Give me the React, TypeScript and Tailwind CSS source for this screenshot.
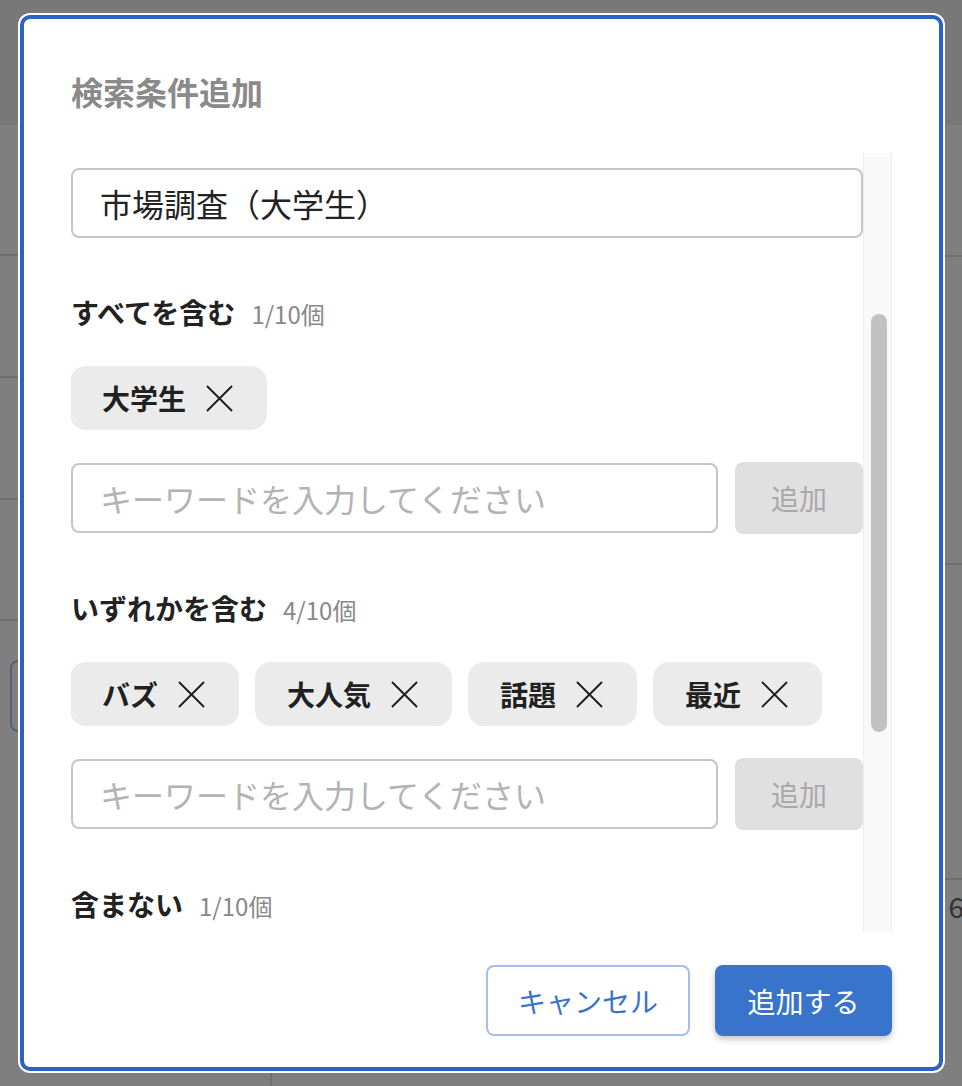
const font = "font-['Noto_Sans_CJK_JP','Noto_Sans',sans-serif]";

const CloseIcon = () => (
  <svg viewBox="0 0 28 28" className="h-[27px] w-[27px] shrink-0" fill="none">
    <path d="M1 1L27 27M27 1L1 27" stroke="#1f1f1f" strokeWidth="2" />
  </svg>
);

const Chip = ({ label }: { label: string }) => (
  <div className="flex h-[64px] items-center gap-[20px] rounded-[16px] bg-[#ebebeb] pl-[32px] pr-[34px]">
    <span className="text-[28px] font-bold leading-none text-[#212121]">{label}</span>
    <CloseIcon />
  </div>
);

const KeywordRow = () => (
  <div className="mt-[33px] flex gap-[17px]">
    <input
      placeholder="キーワードを入力してください"
      className="h-[70px] min-w-0 flex-1 rounded-[8px] border-2 border-[#c6c6c6] px-[27px] text-[32px] text-[#222] outline-none placeholder:text-[#b3b3b3]"
    />
    <button className="-mt-px flex h-[72px] w-[128px] items-center justify-center rounded-[8px] bg-[#e0e0e0] text-[28px] text-[#a9a9a9]">
      追加
    </button>
  </div>
);

const Section = ({ title, count, chips }: { title: string; count: string; chips?: string[] }) => (
  <div className="mt-[54px] first:mt-[55px]">
    <div className="flex h-[40px] items-baseline leading-[40px]">
      <span className="text-[28px] font-bold text-[#222]">{title}</span>
      <span className="ml-[16px] text-[24px] text-[#888]">{count}</span>
    </div>
    {chips && (
      <>
        <div className="mt-[34px] -ml-px flex flex-wrap gap-[16px]">
          {chips.map((c) => (
            <Chip key={c} label={c} />
          ))}
        </div>
        <KeywordRow />
      </>
    )}
  </div>
);

const BackgroundPage = () => (
  <div className="flex h-[1086px] flex-col bg-white">
    <div className="h-[125px] shrink-0 bg-[#f0f0f0]" />
    <div className="flex flex-1">
      <div className="flex w-[272px] shrink-0 flex-col border-r-2 border-[#dedede]">
        <div className="h-[131px] border-b-2 border-[#dedede]" />
        <div className="h-[122px] border-b-2 border-[#dedede]" />
        <div className="h-[122px] border-b-2 border-[#dedede]" />
        <div className="h-[121px] border-b-2 border-[#dedede]" />
        <div className="pl-[10px] pt-[39px]">
          <div className="h-[72px] w-[200px] rounded-[8px] border-2 border-[#a9c2ee]" />
        </div>
      </div>
      <div className="flex flex-1 flex-col">
        <div className="h-[132px] border-b-2 border-[#dedede]" />
        <div className="h-[308px] border-b-2 border-[#dedede]" />
        <div className="h-[315px] border-b-2 border-[#dedede]" />
        <div className="flex justify-end pt-[6px] text-[28px] leading-[40px] text-[#666]">
          <span className="-mr-[2px]">6</span>
        </div>
      </div>
    </div>
  </div>
);

export default function App() {
  return (
    <div className={`relative h-[1086px] w-full overflow-hidden ${font}`}>
      <BackgroundPage />
      <div className="absolute inset-0 bg-black/50 pl-[20px] pt-[15px]">
        <div className="flex h-[1056px] w-[923px] flex-col rounded-[10px] border-4 border-[#2c62c8] bg-white px-[47px] pb-[31px] pt-[48px] ring-2 ring-white">
          <h2 className="flex h-[48px] shrink-0 items-center text-[32px] font-bold leading-none text-[#8a8a8a]">
            検索条件追加
          </h2>

          <div className="mt-[38px] flex min-h-0 flex-1">
            <div className="min-w-0 flex-1 overflow-hidden pt-[15px]">
              <input
                defaultValue="市場調査（大学生）"
                className="h-[70px] w-full rounded-[8px] border-2 border-[#c6c6c6] px-[27px] text-[32px] text-[#222] outline-none"
              />
              <Section title="すべてを含む" count="1/10個" chips={["大学生"]} />
              <Section title="いずれかを含む" count="4/10個" chips={["バズ", "大人気", "話題", "最近"]} />
              <Section title="含まない" count="1/10個" />
            </div>
            <div className="w-[29px] shrink-0 border-x border-[#ededed] bg-[#f9f9f9] pl-[7px]">
              <div className="mt-[161px] h-[418px] w-[16px] rounded-full bg-[#c1c1c1]" />
            </div>
          </div>

          <div className="mt-[33px] flex shrink-0 justify-end gap-[25px]">
            <button className="flex h-[71px] w-[204px] items-center justify-center rounded-[8px] border-2 border-[#a3c0ea] text-[28px] text-[#3a73c9]">
              キャンセル
            </button>
            <button className="flex h-[71px] w-[177px] items-center justify-center rounded-[8px] bg-[#3874cc] text-[28px] text-white shadow-[0_3px_6px_rgba(0,0,0,0.25)]">
              追加する
            </button>
          </div>
        </div>
      </div>
    </div>
  );
}
